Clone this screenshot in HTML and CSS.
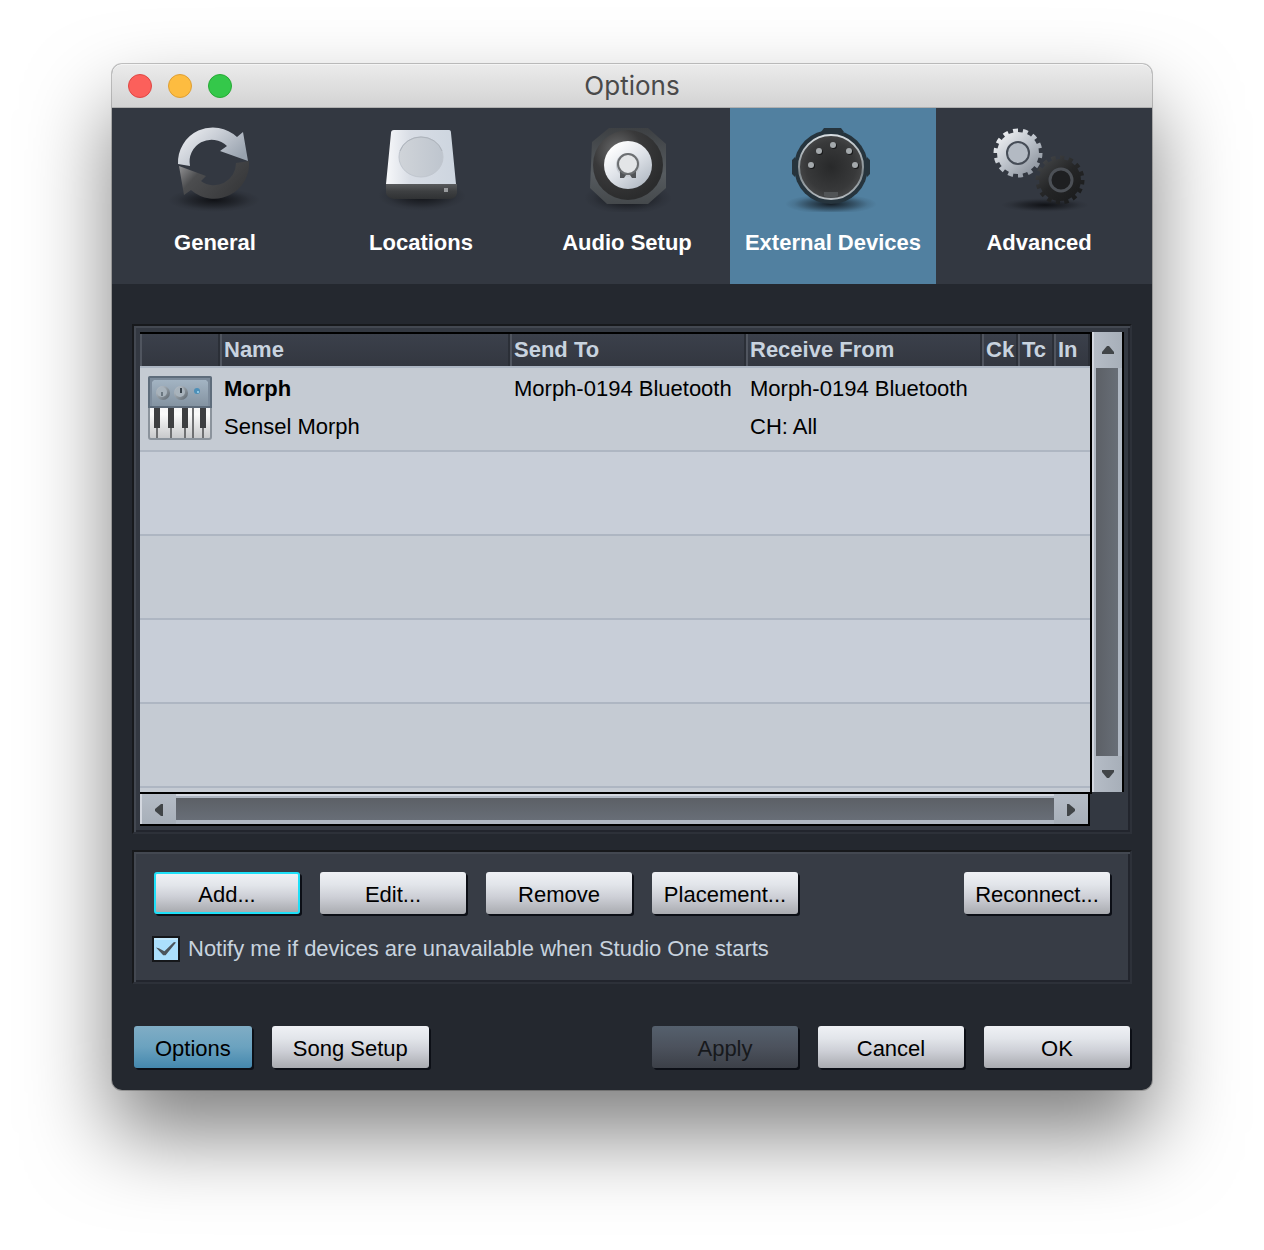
FILE: index.html
```html
<!DOCTYPE html>
<html lang="en">
<head>
<meta charset="utf-8">
<meta name="viewport" content="width=device-width, initial-scale=1">
<title>Options</title>
<link rel="stylesheet" href="styles.css">
</head>
<body>
<main class="window">
  <header class="titlebar">
    <div class="lights">
      <button class="light light-close" aria-label="Close"></button>
      <button class="light light-min" aria-label="Minimize"></button>
      <button class="light light-zoom" aria-label="Zoom"></button>
    </div>
    <h1 class="title">Options</h1>
  </header>

  <nav class="tabs">
    <button class="tab">
      <svg class="tab-icon" viewBox="0 0 100 92" aria-hidden="true">
        <defs>
          <radialGradient id="shade"><stop offset="0" stop-color="#0a0b0e" stop-opacity=".85"/><stop offset=".5" stop-color="#0a0b0e" stop-opacity=".4"/><stop offset=".8" stop-color="#0a0b0e" stop-opacity=".1"/><stop offset="1" stop-color="#0a0b0e" stop-opacity="0"/></radialGradient>
          <linearGradient id="g1" x1="0" y1="0" x2="1" y2=".6"><stop offset="0" stop-color="#f4f5f7"/><stop offset=".5" stop-color="#c9ced6"/><stop offset="1" stop-color="#98a2ae"/></linearGradient>
          <linearGradient id="g2" x1="0" y1="0" x2="1" y2=".5"><stop offset="0" stop-color="#a0a0a2"/><stop offset=".35" stop-color="#4c4d4f"/><stop offset="1" stop-color="#38393b"/></linearGradient>
        </defs>
        <ellipse cx="49" cy="80" rx="46" ry="12" fill="url(#shade)"/>
        <path d="M84 41L71 43A22 22 0 0 1 36 61L41 56L14 46L19 75L26 70A35 35 0 0 0 84 41Z" fill="url(#g2)"/>
        <path d="M13 44A35 35 0 0 1 72 17L78 12L83 41L55 31L62 26A22 22 0 0 0 25 46Z" fill="url(#g1)"/>
      </svg>
      <span>General</span>
    </button>
    <button class="tab">
      <svg class="tab-icon" viewBox="0 0 100 92" aria-hidden="true">
        <defs>
          <linearGradient id="d1"><stop offset="0" stop-color="#f7f8fa"/><stop offset=".35" stop-color="#d8dde5"/><stop offset="1" stop-color="#cdd5df"/></linearGradient>
          <linearGradient id="d2"><stop offset="0" stop-color="#d0d4d9"/><stop offset="1" stop-color="#bec5ce"/></linearGradient>
          <linearGradient id="d3" x1="0" y1="0" x2="0" y2="1"><stop offset="0" stop-color="#595b5d"/><stop offset=".5" stop-color="#3d3f41"/><stop offset="1" stop-color="#303234"/></linearGradient>
        </defs>
        <ellipse cx="51" cy="76" rx="44" ry="15" fill="url(#shade)"/>
        <path d="M15 64H86V73Q85 79 78 79H23Q16 78 15 73Z" fill="url(#d3)"/>
        <path d="M23 10H78Q80 10 80 13L85 64H15L20 13Q20 10 23 10Z" fill="url(#d1)"/>
        <ellipse cx="50" cy="37" rx="22" ry="20" fill="url(#d2)" stroke="#c0c6ce"/>
        <path d="M29 31A22 20 0 0 1 71 31" fill="none" stroke="#adb3bb"/>
        <rect x="73" y="68" width="4" height="4" fill="#999b9d"/>
      </svg>
      <span>Locations</span>
    </button>
    <button class="tab">
      <svg class="tab-icon" viewBox="0 0 100 92" aria-hidden="true">
        <defs>
          <linearGradient id="a1" x1="0" y1="0" x2="0" y2="1"><stop offset="0" stop-color="#3d4043"/><stop offset=".6" stop-color="#565b5f"/><stop offset="1" stop-color="#45494c"/></linearGradient>
          <radialGradient id="a2" cx=".35" cy=".3" r=".7"><stop offset="0" stop-color="#6c6d6e"/><stop offset=".5" stop-color="#39393a"/><stop offset="1" stop-color="#2b2c2d"/></radialGradient>
          <linearGradient id="a3" x1="0" y1="0" x2=".8" y2="1"><stop offset=".15" stop-color="#fff"/><stop offset=".55" stop-color="#dfe3e9"/><stop offset="1" stop-color="#b0b8c2"/></linearGradient>
        </defs>
        <ellipse cx="51" cy="78" rx="44" ry="16" fill="url(#shade)"/>
        <path d="M32 8H71L89 24V68L71 84H30L13 68L15 22Z" fill="url(#a1)"/>
        <ellipse cx="51" cy="45" rx="35" ry="35" fill="url(#a2)"/>
        <circle cx="51" cy="45" r="24" fill="url(#a3)"/>
        <circle cx="51" cy="45" r="12" fill="#c7cbd1"/>
        <path d="M43 50V58H47L49 55H53L55 58H59V50Z" fill="#515457"/>
        <circle cx="51" cy="44" r="10" fill="#e3e5e7" stroke="#6c6f72" stroke-width="2"/>
      </svg>
      <span>Audio Setup</span>
    </button>
    <button class="tab tab-active" aria-current="page">
      <svg class="tab-icon" viewBox="0 0 100 92" aria-hidden="true">
        <defs>
          <radialGradient id="e1" cx=".5" cy=".5" r=".55"><stop offset="0" stop-color="#28292a"/><stop offset=".7" stop-color="#38393a"/><stop offset="1" stop-color="#4a4b4c"/></radialGradient>
          <linearGradient id="e2" x1="0" y1="0" x2="0" y2="1"><stop offset="0" stop-color="#d7dde1"/><stop offset=".6" stop-color="#7e878c"/><stop offset="1" stop-color="#b5bbbf"/></linearGradient>
        </defs>
        <ellipse cx="48" cy="84" rx="46" ry="10" fill="url(#shade)"/>
        <circle cx="48" cy="47" r="37" fill="#26343d"/>
        <path d="M38 12L41 8H58L61 12ZM84 37L87 40V54L84 57ZM12 37L9 40V54L12 57Z" fill="#26343d"/>
        <circle cx="48" cy="47" r="32" fill="url(#e1)" stroke="url(#e2)" stroke-width="2"/>
        <path d="M41 76V72H55V76Q48 79 41 76Z" fill="#515456"/>
        <g fill="#18191a"><circle cx="51" cy="26" r="3"/><circle cx="37" cy="32" r="3"/><circle cx="29" cy="46" r="3"/><circle cx="67" cy="32" r="3"/><circle cx="73" cy="46" r="3"/></g>
        <g fill="#a4a9ac"><circle cx="50" cy="25" r="3"/><circle cx="36" cy="31" r="3"/><circle cx="28" cy="45" r="3"/><circle cx="66" cy="31" r="3"/><circle cx="72" cy="45" r="3"/></g>
      </svg>
      <span>External Devices</span>
    </button>
    <button class="tab">
      <svg class="tab-icon" viewBox="0 0 100 92" aria-hidden="true">
        <defs>
          <linearGradient id="v1" gradientUnits="userSpaceOnUse" x1="10" y1="12" x2="48" y2="54"><stop offset="0" stop-color="#f3f4f6"/><stop offset=".5" stop-color="#bcc2ca"/><stop offset="1" stop-color="#878e98"/></linearGradient>
          <linearGradient id="v2" gradientUnits="userSpaceOnUse" x1="52" y1="40" x2="86" y2="80"><stop offset="0" stop-color="#434547"/><stop offset=".5" stop-color="#252627"/><stop offset="1" stop-color="#1b1c1d"/></linearGradient>
        </defs>
        <ellipse cx="56" cy="85" rx="44" ry="7" fill="url(#shade)"/>
        <circle cx="29" cy="33" r="21" fill="url(#v1)"/>
        <circle cx="29" cy="33" r="22" fill="none" stroke="url(#v1)" stroke-width="5" pathLength="28" stroke-dasharray="1 1"/>
        <circle cx="29" cy="33" r="11" fill="#b3bac3" stroke="#464d57" stroke-width="2"/>
        <circle cx="71" cy="60" r="21" fill="url(#v2)"/>
        <circle cx="71" cy="60" r="22" fill="none" stroke="url(#v2)" stroke-width="5" pathLength="32" stroke-dasharray="1 1"/>
        <circle cx="72" cy="60" r="11" fill="#1e1f21" stroke="#4c5056" stroke-width="3"/>
      </svg>
      <span>Advanced</span>
    </button>
  </nav>

  <section class="panel list-panel" aria-label="External devices">
    <div class="list">
      <table class="devices">
        <colgroup><col class="col-icon"><col><col class="col-port"><col class="col-port"><col class="col-flag"><col class="col-flag"><col class="col-flag"></colgroup>
        <thead>
          <tr><th></th><th>Name</th><th>Send To</th><th>Receive From</th><th>Ck</th><th>Tc</th><th>In</th></tr>
        </thead>
        <tbody>
          <tr>
            <td class="cell-icon">
              <svg class="device-icon" viewBox="0 0 64 64" aria-hidden="true">
                <defs>
                  <linearGradient id="k1" x1="0" y1="0" x2="0" y2="1"><stop offset="0" stop-color="#a3b4c3"/><stop offset="1" stop-color="#8493a1"/></linearGradient>
                  <linearGradient id="k2" x1="0" y1="0" x2="0" y2="1"><stop offset="0" stop-color="#e2e2e3"/><stop offset=".6" stop-color="#fafafa"/><stop offset="1" stop-color="#c6c7c9"/></linearGradient>
                  <linearGradient id="k3" x1="0" y1="0" x2="1" y2="1"><stop offset="0" stop-color="#c5ccd2"/><stop offset="1" stop-color="#59636c"/></linearGradient>
                </defs>
                <rect x="1" y="1" width="62" height="62" rx="2" fill="url(#k2)" stroke="#8b939c" stroke-width="2"/>
                <path d="M0 32V2Q0 0 2 0H62Q64 0 64 2V32Z" fill="#5e6c7b"/>
                <rect x="2" y="2" width="60" height="28" fill="#7c8b9b"/>
                <path d="M4 30V6L6 4H58L60 6V30Z" fill="url(#k1)"/>
                <circle cx="15" cy="17" r="7" fill="url(#k3)"/><circle cx="14" cy="16" r="5" fill="#a8b3bc"/><path d="M14 16V20" stroke="#6b7780" stroke-width="2"/>
                <circle cx="33" cy="17" r="7" fill="url(#k3)"/><circle cx="32" cy="16" r="5" fill="#a8b3bc"/><path d="M33 12V17" stroke="#38424b" stroke-width="2"/>
                <circle cx="49" cy="15" r="3" fill="#4c8fb8"/><circle cx="50" cy="16" r="1" fill="#a5daf5"/>
                <path d="M9 50V62M23 50V62M37 50V62M45 32V62M55 50V62" stroke="#6f7072" stroke-width="2"/>
                <path d="M6 32H12V52H6ZM20 32H26V52H20ZM34 32H40V52H34ZM52 32H58V52H52Z" fill="#3e3f41"/>
              </svg>
            </td>
            <td><strong>Morph</strong><br>Sensel Morph</td>
            <td>Morph-0194 Bluetooth</td>
            <td>Morph-0194 Bluetooth<br>CH: All</td>
            <td></td><td></td><td></td>
          </tr>
          <tr><td colspan="7"></td></tr>
          <tr><td colspan="7"></td></tr>
          <tr><td colspan="7"></td></tr>
          <tr><td colspan="7"></td></tr>
        </tbody>
      </table>
    </div>
    <div class="scroll scroll-v">
      <button class="arrow" aria-label="Scroll up"><svg width="12" height="8" viewBox="0 0 12 8"><path d="M0 8V6L5 0H7L12 6V8Z"/></svg></button>
      <div class="track"></div>
      <button class="arrow" aria-label="Scroll down"><svg width="12" height="8" viewBox="0 0 12 8"><path d="M0 0V2L5 8H7L12 2V0Z"/></svg></button>
    </div>
    <div class="scroll scroll-h">
      <button class="arrow" aria-label="Scroll left"><svg width="8" height="12" viewBox="0 0 8 12"><path d="M8 0H6L0 5V7L6 12H8Z"/></svg></button>
      <div class="track"></div>
      <button class="arrow" aria-label="Scroll right"><svg width="8" height="12" viewBox="0 0 8 12"><path d="M0 0H2L8 5V7L2 12H0Z"/></svg></button>
    </div>
  </section>

  <section class="panel actions" aria-label="Device actions">
    <div class="buttons">
      <button class="btn btn-focus">Add...</button>
      <button class="btn">Edit...</button>
      <button class="btn">Remove</button>
      <button class="btn">Placement...</button>
      <button class="btn push">Reconnect...</button>
    </div>
    <label class="notify"><input class="check" type="checkbox" checked>Notify me if devices are unavailable when Studio One starts</label>
  </section>

  <footer class="footer buttons">
    <button class="btn btn-mode btn-on">Options</button>
    <button class="btn btn-mode">Song Setup</button>
    <button class="btn push" disabled>Apply</button>
    <button class="btn">Cancel</button>
    <button class="btn">OK</button>
  </footer>
</main>
</body>
</html>
```
FILE: styles.css
```css
* { box-sizing: border-box; }

body {
  margin: 0;
  padding: 64px 112px 160px;
  background: #fff;
  font: 22px/28px "Liberation Sans", Arial, sans-serif;
  color: #000;
}

button {
  margin: 0;
  padding: 0;
  border: 0;
  font: inherit;
  color: inherit;
}

.window {
  border-radius: 10px;
  background: #24282f;
  box-shadow: 0 0 0 1px rgba(0, 0, 0, .22), 0 44px 84px rgba(0, 0, 0, .5);
}

/* Title bar */
.titlebar {
  display: grid;
  grid-template-columns: 1fr auto 1fr;
  align-items: center;
  height: 44px;
  padding: 0 16px;
  border-radius: 10px 10px 0 0;
  border-bottom: 1px solid #b0b0b0;
  background: linear-gradient(#ebebeb, #d3d3d3);
  box-shadow: inset 0 1px #f4f4f4;
}

.lights { display: flex; gap: 16px; }

.light {
  width: 24px;
  height: 24px;
  border: 1px solid;
  border-radius: 50%;
}

.light-close { background: #fc605b; border-color: #df4744; }
.light-min { background: #fdbc40; border-color: #de9f34; }
.light-zoom { background: #34c84a; border-color: #27aa35; }

.title {
  margin: 0;
  font: 400 26px/32px Inter, "Liberation Sans", sans-serif;
  color: #4a4a4a;
}

/* Section tabs */
.tabs {
  display: grid;
  grid-template-columns: repeat(5, minmax(0, 206px));
  background: #333841;
}

.tab {
  display: flex;
  flex-direction: column;
  align-items: center;
  gap: 17px;
  height: 176px;
  padding-top: 12px;
  background: none;
  color: #fff;
  font-weight: 700;
  white-space: nowrap;
}

.tab-active { background: #5180a0; }

.tab-icon { width: 100px; height: 92px; }

/* Bevelled panels */
.panel {
  margin: 0 20px;
  border: 2px solid;
  border-color: #17191c #2d3139 #2d3139 #17191c;
  background: #333841;
  box-shadow: inset 2px 2px #434851, inset -2px -2px #22252d;
}

.list-panel {
  display: grid;
  grid-template-columns: minmax(0, 1fr) 32px;
  margin-top: 40px;
  padding: 6px;
}

/* Device list */
.list {
  padding-bottom: 4px;
  border: solid #000;
  border-width: 2px 2px 2px 0;
  background: #c5cbd3;
}

.devices {
  width: 100%;
  table-layout: fixed;
  border-collapse: separate;
  border-spacing: 0;
  line-height: 38px;
}

.col-icon { width: 80px; }
.col-port { width: 236px; }
.col-flag { width: 36px; }

.devices th {
  height: 34px;
  padding: 0 0 0 4px;
  border-bottom: 2px solid #adb6c3;
  background: linear-gradient(#3b404b, #333740);
  box-shadow: inset 2px 0 #50555f, inset -2px 0 #2b2f37;
  color: #c8d3df;
  font-weight: 700;
  line-height: 32px;
  text-align: left;
}

.devices td {
  height: 84px;
  padding: 2px 0 0 4px;
  border-bottom: 2px solid #aeb6c2;
  vertical-align: top;
  white-space: nowrap;
}

.devices tr:nth-child(even) td { background: #c8ced8; }

.devices .cell-icon { padding: 8px 8px 0; }

.device-icon { display: block; width: 64px; height: 64px; }

/* Scroll bars */
.scroll { display: flex; background: #b0b8c3; }

.scroll-v {
  flex-direction: column;
  margin-bottom: 2px;
  border-right: 2px solid #000;
  box-shadow: inset 2px 0 #d3d7df;
}

.scroll-h {
  height: 32px;
  margin-right: 2px;
  border: solid #000;
  border-width: 0 2px 2px 0;
  box-shadow: inset 0 2px #d3d7df;
}

.arrow {
  display: grid;
  place-items: center;
  flex: 0 0 36px;
}

.arrow path { fill: #414548; }

.scroll-v .arrow { margin-left: 2px; background: linear-gradient(90deg, #b5bcc6, #a7afb9); }
.scroll-h .arrow { padding-top: 2px; background: linear-gradient(#b5bcc6, #a7afb9); }
.scroll-h .arrow:first-child { border-left: 2px solid #d3d7df; }
.scroll-h .arrow:last-child { flex-basis: 34px; }

.track { flex: 1; }
.scroll-v .track { margin: 0 4px; background: linear-gradient(90deg, #5c6066, #686e77); }
.scroll-h .track { margin: 4px 0; background: linear-gradient(#5c6066, #686e77); }

/* Buttons */
.actions {
  margin-top: 16px;
  padding: 20px 18px 19px;
  background: #373c45;
}

.buttons { display: flex; gap: 20px; }
.actions .buttons { padding: 0 2px; }

.btn {
  min-width: 146px;
  height: 42px;
  padding: 3px 10px 0;
  border-radius: 3px;
  background: linear-gradient(#eff1f5, #e2e5ea 30%, #cdcfd6 60%, #a9abb0);
  box-shadow: 2px 2px #0c0f16;
}

.btn-focus { border: 2px solid #1fe0f8; }
.btn-mode { min-width: 0; padding: 3px 21px 0; }
.btn-on { background: linear-gradient(#80adc5, #6ba2bf 50%, #4488ae); }
.btn:disabled { background: linear-gradient(#55606d, #4c525d 50%, #3c4048); color: #17191c; }
.push { margin-left: auto; }

.notify {
  display: flex;
  align-items: center;
  gap: 8px;
  margin-top: 21px;
  color: #c8d3df;
}

.check {
  appearance: none;
  display: grid;
  place-items: center;
  width: 28px;
  height: 26px;
  margin: 0;
  border: 2px solid #15171a;
  background: linear-gradient(#c3e9fd 2px, #abdffc 2px);
}

.check:checked::before {
  content: "";
  width: 20px;
  height: 14px;
  background: #4b545b;
  clip-path: polygon(0 40%, 14% 44%, 42% 66%, 90% 0, 100% 4%, 48% 94%, 36% 94%);
}

.footer { padding: 42px 22px 22px; }
```
